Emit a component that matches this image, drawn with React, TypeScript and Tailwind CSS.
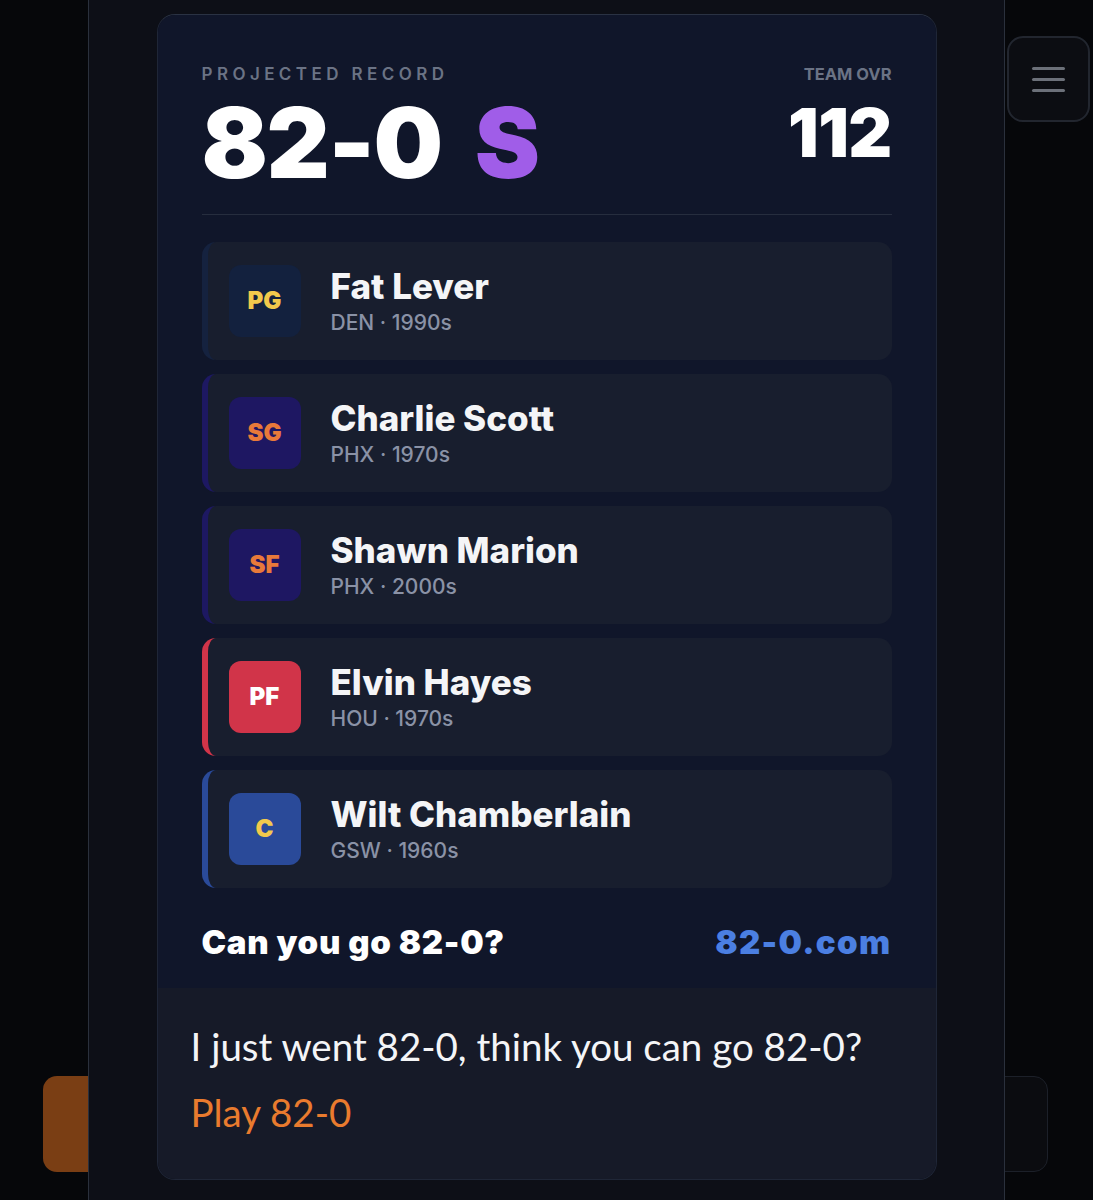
import React from "react";

type Player = {
  pos: string;
  name: string;
  team: string;
  era: string;
  accent: string;
  badge: string;
  badgeText: string;
};

const roster: Player[] = [
  { pos: "PG", name: "Fat Lever", team: "DEN", era: "1990s", accent: "border-[#15223f]", badge: "bg-[#13213e]", badgeText: "text-[#f2c94c]" },
  { pos: "SG", name: "Charlie Scott", team: "PHX", era: "1970s", accent: "border-[#1d1862]", badge: "bg-[#1e1762]", badgeText: "text-[#e8793a]" },
  { pos: "SF", name: "Shawn Marion", team: "PHX", era: "2000s", accent: "border-[#1d1862]", badge: "bg-[#1e1762]", badgeText: "text-[#e8793a]" },
  { pos: "PF", name: "Elvin Hayes", team: "HOU", era: "1970s", accent: "border-[#d13449]", badge: "bg-[#d13449]", badgeText: "text-white" },
  { pos: "C", name: "Wilt Chamberlain", team: "GSW", era: "1960s", accent: "border-[#2a4a99]", badge: "bg-[#2a4a99]", badgeText: "text-[#f2c94c]" },
];

function PlayerRow({ p }: { p: Player }) {
  return (
    <div className={`flex h-[118px] items-center rounded-[14px] border-l-[6px] bg-[#181e2e] pl-[21px] ${p.accent}`}>
      <div className={`flex h-[72px] w-[72px] items-center justify-center rounded-[12px] ${p.badge}`}>
        <span className={`text-[24px] font-black leading-none ${p.badgeText}`}>{p.pos}</span>
      </div>
      <div className="ml-[30px] flex flex-col">
        <span className="text-[35px] font-extrabold leading-[40px] text-[#f4f5f7]">{p.name}</span>
        <span className="mt-[4px] text-[21px] font-medium leading-[26px] text-[#8a92a6]">
          {p.team} · {p.era}
        </span>
      </div>
    </div>
  );
}

function ShareCard() {
  return (
    <div className="mx-auto mt-[14px] w-[780px] overflow-hidden rounded-[18px] border border-[#1f2637] border-t-[#2a3243]">
      <div className="bg-[#10162a] px-[44px] pt-[49px]" style={{ fontFamily: "Inter, 'Noto Sans', sans-serif" }}>
        <div className="flex items-start justify-between">
          <div className="flex flex-col">
            <span className="text-[17px] font-semibold leading-[20px] tracking-[0.26em] text-[#6b7385]">PROJECTED RECORD</span>
            <span className="mt-[10px] text-[98px] font-black leading-none tracking-[-0.015em] text-white">
              82-0<span className="ml-[33px] text-[#a05de8]">S</span>
            </span>
          </div>
          <div className="flex flex-col items-end">
            <span className="text-[16.5px] font-bold leading-[20px] text-[#6b7385]">TEAM OVR</span>
            <span className="mt-[14px] text-[68px] font-black leading-none tracking-[-0.01em] text-white">112</span>
          </div>
        </div>

        <div className="mt-[22px] h-px bg-[#262d3e]" />

        <div className="mt-[27px] flex flex-col gap-[14px]">
          {roster.map((p) => (
            <PlayerRow key={p.pos} p={p} />
          ))}
        </div>

        <div className="flex items-center justify-between pb-[26px] pt-[34px]">
          <span className="text-[33px] font-black leading-[40px] tracking-[0.02em] text-white">Can you go 82-0?</span>
          <span className="text-[33px] font-black leading-[40px] tracking-[0.04em] text-[#4b7fe2]">82-0.com</span>
        </div>
      </div>

      <div className="bg-[#161a28] pb-[34px] pl-[33px] pr-[34px] pt-[25px]" style={{ fontFamily: "Lato, 'Noto Sans', sans-serif" }}>
        <p className="text-[38.5px] leading-[66px] text-[#f4f5f7]">I just went 82-0, think you can go 82-0?</p>
        <p className="text-[38.5px] leading-[66px] text-[#e97b2e]">Play 82-0</p>
      </div>
    </div>
  );
}

export default function App() {
  return (
    <div className="relative h-[1200px] w-full overflow-hidden bg-[#06070a]">
      {/* app shell behind the share sheet */}
      <div className="flex h-full flex-col">
        <div className="flex justify-end pr-[3px] pt-[36px]">
          <button className="flex h-[86px] w-[83px] flex-col items-center justify-center gap-[8px] rounded-[16px] border-2 border-[#22262f] bg-[#0c0d12]">
            <span className="h-[3px] w-[33px] rounded-full bg-[#6c7079]" />
            <span className="h-[3px] w-[33px] rounded-full bg-[#6c7079]" />
            <span className="h-[3px] w-[33px] rounded-full bg-[#6c7079]" />
          </button>
        </div>
        <div className="flex-1" />
        <div className="flex justify-between pb-[28px] pl-[43px] pr-[45px]">
          <div className="h-[96px] w-[140px] rounded-[14px] bg-[#7a3e14]" />
          <div className="h-[96px] w-[140px] rounded-[14px] border border-[#1c2029] bg-[#0b0c10]" />
        </div>
      </div>

      {/* share sheet overlay */}
      <div className="absolute bottom-0 left-[88px] top-0 w-[917px] border-x border-[#2a303c] bg-[#0d0f17]">
        <ShareCard />
      </div>
    </div>
  );
}
